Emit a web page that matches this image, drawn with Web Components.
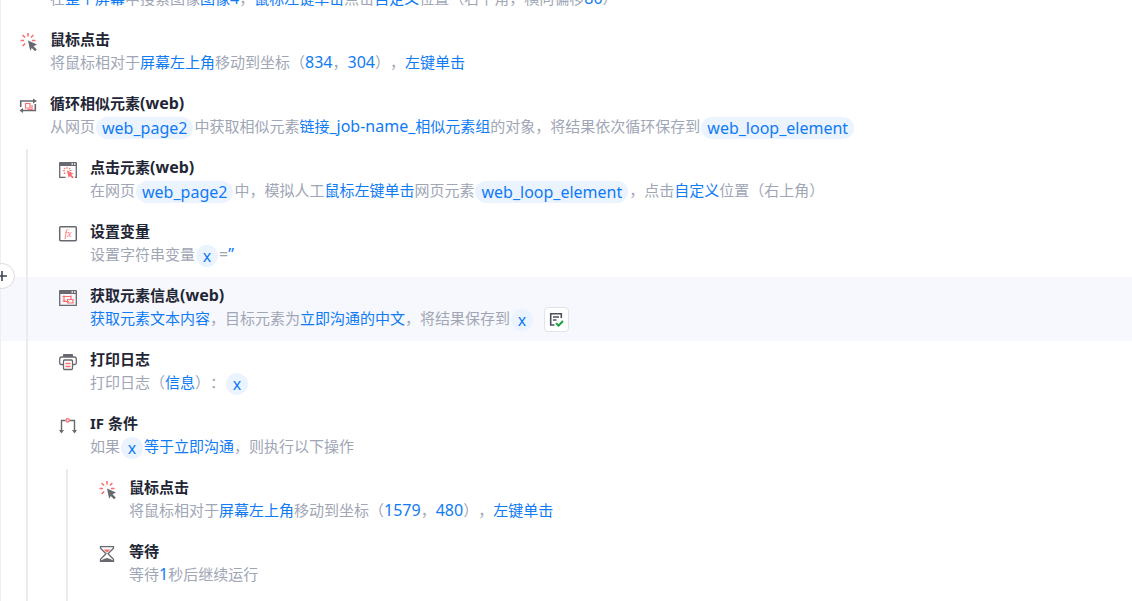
<!DOCTYPE html>
<html lang="zh-CN">
<head>
<meta charset="utf-8">
<title>流程编辑</title>
<style>
html, body { height: 100%; margin: 0; }
body {
  overflow: hidden;
  background: #fff;
  font: 15px/24px "Noto Sans", "Noto Sans CJK SC", sans-serif;
  text-spacing-trim: space-all;
  --ink: #1f2635;
  --muted: #a0a6b6;
  --link: #0f7bf5;
  --pill: #ebf3ff;
  --hover: #f7f8fd;
  --guide: #ebebed;
  --icon: #686870;
  --accent: #f96f6f;
}
</style>
</head>
<body>
<flow-editor>
  <flow-step>在<param-link>整个屏幕</param-link>中搜索图像<param-link>图像<latin-run>4</latin-run></param-link>，<param-link>鼠标左键单击</param-link>点击<param-link>自定义</param-link>位置（右下角，横向偏移<param-link><latin-run>80</latin-run></param-link>）</flow-step>
  <flow-step icon="click"><span slot="title">鼠标点击</span>将鼠标相对于<param-link>屏幕左上角</param-link>移动到坐标（<param-link><latin-run>834</latin-run></param-link>，<param-link><latin-run>304</latin-run></param-link>），<param-link>左键单击</param-link></flow-step>
  <flow-step icon="loop"><span slot="title">循环相似元素<latin-run>(web)</latin-run></span>从网页<var-pill>web_page2</var-pill>中获取相似元素<param-link>链接<latin-run>_job-name_</latin-run>相似元素组</param-link>的对象，将结果依次循环保存到<var-pill>web_loop_element</var-pill></flow-step>
  <flow-group level="1">
    <flow-step icon="webclick"><span slot="title">点击元素<latin-run>(web)</latin-run></span>在网页<var-pill>web_page2</var-pill>中，模拟人工<param-link>鼠标左键单击</param-link>网页元素<var-pill>web_loop_element</var-pill>，点击<param-link>自定义</param-link>位置（右上角）</flow-step>
    <flow-step icon="variable"><span slot="title">设置变量</span>设置字符串变量<var-pill>x</var-pill><latin-run>=</latin-run><param-link><latin-run>”</latin-run></param-link></flow-step>
    <flow-step icon="extract" active><span slot="title">获取元素信息<latin-run>(web)</latin-run></span><param-link>获取元素文本内容</param-link>，目标元素为<param-link>立即沟通的中文</param-link>，将结果保存到<var-pill>x</var-pill><check-button></check-button></flow-step>
    <flow-step icon="print"><span slot="title">打印日志</span>打印日志（<param-link>信息</param-link>）：<var-pill>x</var-pill></flow-step>
    <flow-step icon="branch"><span slot="title">IF 条件</span>如果<var-pill>x</var-pill><param-link>等于立即沟通</param-link>，则执行以下操作</flow-step>
    <flow-group level="2">
      <flow-step icon="click"><span slot="title">鼠标点击</span>将鼠标相对于<param-link>屏幕左上角</param-link>移动到坐标（<param-link><latin-run>1579</latin-run></param-link>，<param-link><latin-run>480</latin-run></param-link>），<param-link>左键单击</param-link></flow-step>
      <flow-step icon="wait"><span slot="title">等待</span>等待<param-link><latin-run>1</latin-run></param-link>秒后继续运行</flow-step>
      <flow-step></flow-step>
    </flow-group>
  </flow-group>
</flow-editor>

<script>
function define(name, html, setup) {
  const template = document.createElement('template');
  template.innerHTML = html.trim();
  customElements.define(name, class extends HTMLElement {
    constructor() {
      super();
      this.attachShadow({ mode: 'open' }).append(template.content.cloneNode(true));
    }
    connectedCallback() {
      if (setup) setup(this, this.shadowRoot);
    }
  });
}

const burst = `<g stroke="var(--accent)" stroke-width="1.6" fill="none"><path d="M10 1v3.500M2.500 8.500H6M14 8.500h3.500M4.600 3l2.500 2.500M15.400 3l-2.500 2.500M4.600 14l2.500-2.500"/></g>`;
const frame = `<path d="M1 3a1 1 0 0 1 1-1h16a1 1 0 0 1 1 1v3H1z" fill="var(--icon)"/><path d="M13.500 3.200h1.500v1.500h-1.500zM16 3.200h1.500v1.500H16z" fill="#fff"/>`;

const icons = {
  click: `${burst}<path d="M10 8.500l9 4-3.500 1.700 3.300 3.300-1.800 1.700-3.200-3.200-1.600 2.700z" fill="var(--icon)"/>`,
  loop: `<g fill="none" stroke="var(--icon)" stroke-width="1.600"><path d="M2.700 11V5H16M17.300 8v6.500H4"/></g><path d="M15 2.500l4 2.500-4 2.500zM5 12L1.500 14.500 5 17z" fill="var(--icon)"/><path d="M7.500 7.500H12V12H7.500zM14 9v4.500H9.500" fill="none" stroke="var(--accent)" stroke-width="1.200"/>`,
  webclick: `${frame}<path d="M1.700 5v12.300H7.500M17 17.300h1.300V5" fill="none" stroke="var(--icon)" stroke-width="1.300"/><path d="M9 6.800v2M4.800 10.800H7M11.500 10.500h2M6 7.800l1.300 1.300M12.300 7.800L11 9.100M6 13.800l1.300-1.300" stroke="var(--accent)" stroke-width="1.100"/><path d="M8.800 10.500l6.700 3-2.300 1.200 2.600 2.600-1.300 1.300-2.600-2.600-1.200 2z" fill="var(--accent)"/>`,
  variable: `<rect x="1.700" y="2.700" width="16.600" height="14" rx="1" fill="none" stroke="var(--icon)" stroke-width="1.500"/><text x="6.500" y="13" font-family="Liberation Serif, serif" font-style="italic" font-size="10" fill="var(--accent)">fx</text>`,
  extract: `${frame}<path d="M1.700 5v12.300h16.600V5" fill="none" stroke="var(--icon)" stroke-width="1.300"/><path d="M6 7.500v6h5M4.500 8.500H13V12M13 7.500v2M9.500 11.500H15v3.500H9.500zM4.500 13H8" fill="none" stroke="var(--accent)" stroke-width="1.200"/>`,
  print: `<path d="M5 5V2.500q0-.500.500-.500h9q.500 0 .500.500V5z" fill="var(--icon)"/><path d="M5.500 12.500H3q-1.300 0-1.300-1.500V7Q1.700 5 3.500 5h13q1.800 0 1.800 2v4q0 1.500-1.300 1.500h-2.500" fill="none" stroke="var(--icon)" stroke-width="1.300"/><rect x="5.500" y="8" width="9" height="9.500" rx="1" fill="#fff" stroke="var(--icon)" stroke-width="1.300"/><path d="M7.500 11.500h5M7.500 14.500h5" stroke="var(--accent)" stroke-width="1.300"/>`,
  branch: `<path d="M7.500 4.500H3.500V15M12 4.500h4.500V15" fill="none" stroke="var(--icon)" stroke-width="1.400"/><path d="M1 14h5l-2.500 3.500zM14 14h5l-2.500 3.500z" fill="var(--icon)"/><circle cx="9.700" cy="4.300" r="1.700" fill="none" stroke="var(--accent)" stroke-width="1.400"/>`,
  wait: `<path d="M3.500 2.700h13v1.500L11 9.800l5.500 5.500v2h-13v-2L9 9.800 3.500 4.200z" fill="none" stroke="var(--icon)" stroke-width="1.300"/><path d="M6.500 5.500h7L10 8.800z" fill="var(--accent)"/><path d="M4 16.500q2.500-2 6-2.500 3.500.500 6 2.500V18H4z" fill="var(--icon)"/>`
};

define('latin-run', `<style>:host { font-size: 16px; }</style><slot></slot>`);

define('param-link', `<style>a { color: var(--link); text-decoration: none; }</style><a href="#"><slot></slot></a>`);

define('var-pill', `
  <style>
    :host { display: inline-flex; vertical-align: middle; margin: 0 1px; }
    button {
      min-width: 22px; height: 22px; padding: 0 6px; border: 0; border-radius: 11px;
      background: var(--pill); color: var(--link);
      font: inherit; font-size: 16px; line-height: 22px; cursor: pointer;
    }
  </style>
  <button type="button"><slot></slot></button>`);

define('check-button', `
  <style>
    :host { display: inline-flex; vertical-align: middle; margin-left: 10px; }
    button {
      display: grid; place-items: center; box-sizing: border-box;
      width: 25px; height: 25px; padding: 0;
      border: 1px solid #e1e3ea; border-radius: 4px; background: #fff;
    }
    svg { display: block; }
  </style>
  <button type="button" aria-label="查看结果">
    <svg width="15" height="15" viewBox="0 0 15 15" fill="none">
      <path d="M5.500 13H1.700V1.700h10.600V6M4 5h6M4 8h3.500" stroke="#4d525c" stroke-width="1.600"/>
      <path d="M7 11.200l2.500 2.500L14 9" stroke="#16a03a" stroke-width="1.900"/>
    </svg>
  </button>`);

define('flow-step', `
  <style>
    :host {
      display: flex; gap: 12px; box-sizing: border-box; min-height: 64px;
      padding: 7px 16px 11px var(--indent);
    }
    :host([active]) { background: var(--hover); }
    svg { flex: none; margin-top: 4px; }
    .body { display: flex; flex-direction: column; justify-content: flex-end; min-width: 0; }
    h3 { margin: 0; color: var(--ink); font-size: 15px; font-weight: 700; line-height: 22px; }
    p { margin: 0; height: 24px; color: var(--muted); white-space: nowrap; }
  </style>
  <svg width="20" height="20" viewBox="0 0 20 20" aria-hidden="true"></svg>
  <div class="body">
    <h3><slot name="title"></slot></h3>
    <p><slot></slot></p>
  </div>`,
  (host, root) => { root.querySelector('svg').innerHTML = icons[host.getAttribute('icon')] || ''; });

define('flow-group', `
  <style>
    :host { display: block; position: relative; --indent: 58px; --line: 26px; }
    :host([level="2"]) { --indent: 97px; --line: 66px; }
    .guide {
      position: absolute; top: 0; bottom: 0; left: var(--line);
      width: 2px; background: var(--guide);
    }
  </style>
  <slot></slot>
  <div class="guide"></div>`);

define('flow-editor', `
  <style>
    :host {
      display: block; position: relative; height: 100%;
      overflow: hidden; --indent: 18px;
    }
    .steps { margin-top: -43px; }
    .edge { position: absolute; inset: 0 auto 0 0; width: 1px; background: #eeeef2; }
    .add {
      position: absolute; left: -11px; top: 263px; display: grid; place-items: center;
      box-sizing: border-box; width: 26px; height: 26px; padding: 0;
      border: 1px solid #dcdce0; border-radius: 50%; background: #fff;
    }
  </style>
  <div class="steps"><slot></slot></div>
  <div class="edge"></div>
  <button class="add" type="button" aria-label="添加步骤">
    <svg width="12" height="12" viewBox="0 0 12 12"><path d="M6 1v10M1 6h10" stroke="#3f444e" stroke-width="1.600"/></svg>
  </button>`);
</script>
</body>
</html>
